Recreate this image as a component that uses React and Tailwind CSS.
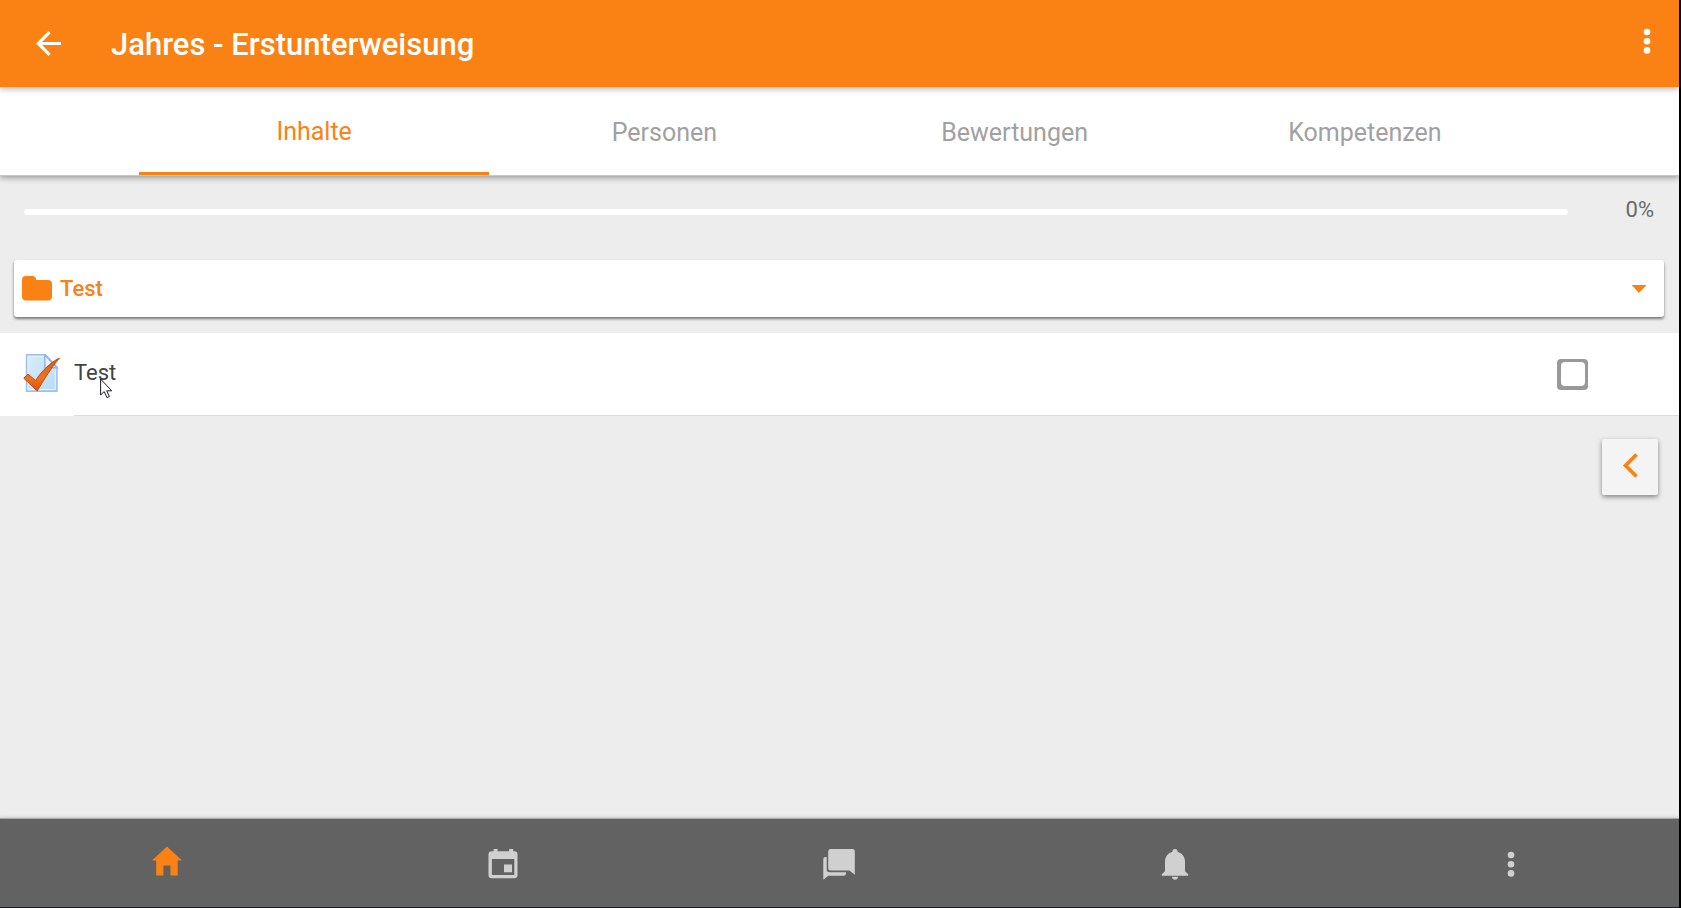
import React from "react";

const tabs = ["Inhalte", "Personen", "Bewertungen", "Kompetenzen"];

function ArrowBack() {
  return (
    <svg width="25" height="25" viewBox="0 0 25 25" aria-hidden="true">
      <path
        fill="currentColor"
        d="M25 10.9v3.2H6.1l8.6 8.6-2.2 2.3L0 12.5 12.5 0l2.2 2.3-8.6 8.6z"
      />
    </svg>
  );
}

function DotsVertical() {
  return (
    <svg width="8" height="28" viewBox="0 0 8 28" aria-hidden="true">
      <g fill="currentColor">
        <circle cx="4" cy="5" r="3.3" />
        <circle cx="4" cy="14.2" r="3.3" />
        <circle cx="4" cy="23.4" r="3.3" />
      </g>
    </svg>
  );
}

function FolderIcon() {
  return (
    <svg width="30" height="25" viewBox="0 0 30 25" aria-hidden="true">
      <path
        fill="currentColor"
        d="M4 0h6.500a3.500 3.500 0 0 1 3.500 3.500v.6h12a4 4 0 0 1 4 4V20.500a4 4 0 0 1-4 4H4a4 4 0 0 1-4-4V4a4 4 0 0 1 4-4z"
      />
    </svg>
  );
}

function QuizIcon() {
  return (
    <svg width="37" height="38" viewBox="0 0 37 38" aria-hidden="true">
      <defs>
        <linearGradient id="paper" x1="0" y1="0" x2="1" y2="1">
          <stop offset="0" stopColor="#d9edf9" />
          <stop offset="1" stopColor="#b5dcf5" />
        </linearGradient>
        <linearGradient id="tick" x1="0" y1="0" x2="0" y2="1">
          <stop offset="0" stopColor="#c85a1e" />
          <stop offset="0.6" stopColor="#f3731c" />
          <stop offset="1" stopColor="#d9500c" />
        </linearGradient>
      </defs>
      <path
        d="M3.500 .8H22.500L34 13v24.200H3.500z"
        fill="url(#paper)"
        stroke="#9dbdf6"
        strokeWidth="1.400"
      />
      <path d="M5.200 2.500h16M5.200 2.500v33h27V15" fill="none" stroke="#e6f4fc" strokeWidth="1" />
      <path d="M21.800 1v12.700H34z" fill="#eef6fd" stroke="#8fb4f5" strokeWidth="1.500" />
      <path
        d="M.8 24.300L5 20l7.500 6.500C18 18 27 8.500 36.500 4 29 13 21 25.500 14.200 37z"
        fill="url(#tick)"
        stroke="#b8470f"
        strokeWidth=".9"
        strokeLinejoin="round"
      />
    </svg>
  );
}

function Cursor() {
  return (
    <svg
      className="absolute left-[26px] top-[19px]"
      width="13"
      height="21"
      viewBox="0 0 13 21"
      aria-hidden="true"
    >
      <path
        d="M.6 1v16l3.600-3.400 2.800 6 2.400-1.100-2.700-5.700h5L.6 1z"
        fill="#fff"
        stroke="#1a1a2a"
        strokeWidth="1"
      />
    </svg>
  );
}

function HomeIcon() {
  return (
    <svg width="32" height="32" viewBox="0 0 32 32" aria-hidden="true">
      <path fill="currentColor" d="M12.400 29.500v-10h7v10h7.300v-15H31L16 .5 1 14.500h4.200v15z" />
    </svg>
  );
}

function CalendarIcon() {
  return (
    <svg width="32" height="32" viewBox="0 0 32 32" aria-hidden="true">
      <path
        fill="currentColor"
        fillRule="evenodd"
        d="M6.600 1h4v2.200h11.600V1h4v2.200h1.100a3.200 3.200 0 0 1 3.200 3.200v20.700a3.200 3.200 0 0 1-3.200 3.200H4.700a3.200 3.200 0 0 1-3.200-3.200V6.400a3.200 3.200 0 0 1 3.200-3.200h1.900zM4.900 11v16h22.400V11zM17 16.500h8v7.700h-8z"
      />
    </svg>
  );
}

function ChatIcon() {
  return (
    <svg width="32" height="32" viewBox="0 0 32 32" aria-hidden="true">
      <path
        fill="currentColor"
        d="M7.700 1h21.600a2.500 2.500 0 0 1 2.500 2.500v23.200l-5.400-4.200H7.700A2.500 2.500 0 0 1 5.200 20V3.500A2.500 2.500 0 0 1 7.700 1z"
      />
      <path
        fill="currentColor"
        d="M3.700 9v12.500A2.700 2.700 0 0 0 6.400 24.200H23v1.200a2.300 2.300 0 0 1-2.300 2.300H5.200L.3 31.700V11.200A2.200 2.200 0 0 1 2.500 9z"
      />
    </svg>
  );
}

function BellIcon() {
  return (
    <svg width="32" height="32" viewBox="0 0 32 32" aria-hidden="true">
      <path
        fill="currentColor"
        d="M13.300 3.900C13.300 2 14.300 1 16 1s2.700 1 2.700 2.900c4.500 1.200 7.300 4.900 7.300 9.600v9.800l3.200 3v1.400H2.800v-1.400l3.200-3v-9.800c0-4.700 2.800-8.400 7.300-9.600zM12.900 28.800h6.200c-.2 1.900-1.400 3-3.100 3s-2.900-1.100-3.100-3z"
      />
    </svg>
  );
}

const nav = [
  { label: "Startseite", icon: <HomeIcon />, style: "text-[#fa8214] pb-[2px] pr-[2px]" },
  { label: "Kalender", icon: <CalendarIcon />, style: "text-[#d0d0d0] pt-[2px] pr-[2px]" },
  { label: "Mitteilungen", icon: <ChatIcon />, style: "text-[#d0d0d0] pt-[2px]" },
  { label: "Benachrichtigungen", icon: <BellIcon />, style: "text-[#d0d0d0] pt-[2px]" },
  { label: "Mehr", icon: <DotsVertical />, style: "text-[#d0d0d0] pt-[2px]" },
];

export default function App() {
  return (
    <div className="flex min-h-screen flex-col border-r-2 border-black bg-[#ededed] font-['Roboto',sans-serif] text-[22px] leading-7">
      <header className="relative z-20 flex h-[87px] items-center bg-[#fa8214] pl-9 pr-7 text-white shadow-[0_2px_6px_rgba(0,0,0,0.3)]">
        <button aria-label="Zurück" className="flex">
          <ArrowBack />
        </button>
        <h1 className="ml-[50px] flex-1 pt-[2px] text-[31px] font-medium leading-9">
          Jahres - Erstunterweisung
        </h1>
        <button aria-label="Menü" className="flex pb-[6px]">
          <DotsVertical />
        </button>
      </header>

      <nav
        aria-label="Kurs"
        className="relative z-10 flex h-[89px] border-b border-[#c8c8c8] bg-white px-[139px] text-[25px] shadow-[0_2px_6px_rgba(0,0,0,0.35)]"
      >
        {tabs.map((t, i) => (
          <button
            key={t}
            className={
              i === 0
                ? "flex-1 border-b-[3px] border-[#fa8214] pt-1 text-[#fa8214]"
                : "flex-1 pt-1 text-[#a1a1a1]"
            }
          >
            {t}
          </button>
        ))}
      </nav>

      <main className="flex flex-1 flex-col">
        <div className="flex items-center pl-6 pr-[25px] pt-5">
          <div
            role="progressbar"
            aria-label="Fortschritt"
            aria-valuenow={0}
            aria-valuemin={0}
            aria-valuemax={100}
            className="mt-1 h-[6px] flex-1 rounded-full bg-white"
          />
          <span className="w-[86px] text-right text-[#6a6a6a]">0%</span>
        </div>

        <button className="ml-[14px] mr-[15px] mt-9 flex h-[57px] items-center rounded-[3px] bg-white pl-2 pr-[17px] text-[#fa8214] shadow-[0_2px_3px_rgba(0,0,0,0.5)]">
          <FolderIcon />
          <span className="ml-2 flex-1 text-left font-medium">Test</span>
          <svg width="16" height="8" viewBox="0 0 16 8" aria-hidden="true">
            <path fill="currentColor" d="M.5 0h15L8 8z" />
          </svg>
        </button>

        <div className="mt-4 flex h-[83px] bg-white pl-[23px]">
          <div className="flex items-center pb-1">
            <QuizIcon />
          </div>
          <div className="ml-[14px] flex flex-1 items-center border-b border-[#dcdcdc] pr-[91px]">
            <label htmlFor="done" className="relative flex-1 pb-[2px] text-[#444]">
              Test
              <Cursor />
            </label>
            <input
              id="done"
              type="checkbox"
              className="grid size-[31px] appearance-none place-items-center rounded-[4px] bg-[#999] before:size-6 before:rounded-[4px] before:bg-white before:content-['']"
            />
          </div>
        </div>

        <button
          aria-label="Seitenleiste öffnen"
          className="mr-[21px] mt-[23px] flex size-14 items-center justify-center self-end rounded-[2px] bg-[#f4f4f4] pb-[3px] text-[#fa8214] shadow-[0_2px_5px_rgba(0,0,0,0.45)]"
        >
          <svg width="15" height="25" viewBox="0 0 15 25" aria-hidden="true">
            <path fill="none" stroke="currentColor" strokeWidth="3.700" d="M13.500 1.500l-11 11 11 11" />
          </svg>
        </button>
      </main>

      <nav
        aria-label="Hauptnavigation"
        className="flex h-[90px] border-b border-t border-b-[#1c1a30] border-t-[#a8a8a8] bg-[#626262] shadow-[0_-1px_3px_rgba(0,0,0,0.15)]"
      >
        {nav.map((n) => (
          <button
            key={n.label}
            aria-label={n.label}
            className={"flex w-1/5 items-center justify-center " + n.style}
          >
            {n.icon}
          </button>
        ))}
      </nav>
    </div>
  );
}
